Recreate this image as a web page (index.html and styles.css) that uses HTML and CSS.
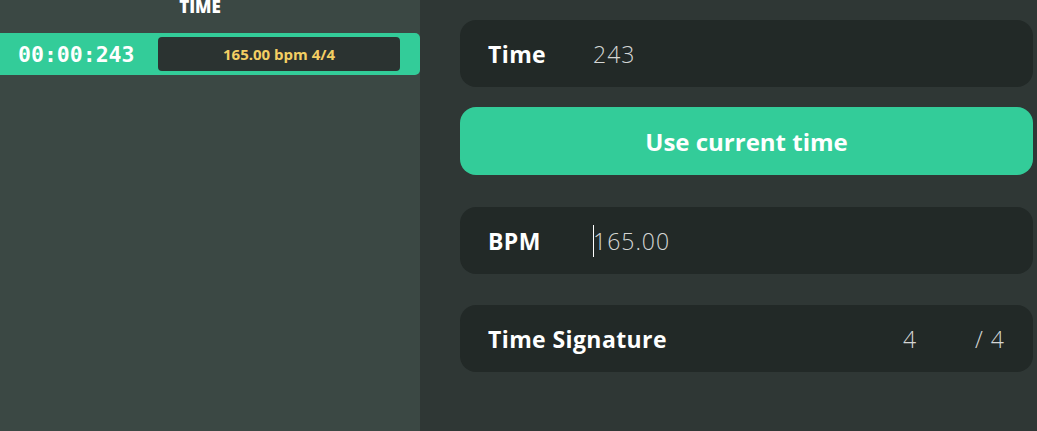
FILE: index.html
```html
<!DOCTYPE html>
<html>
<head>
<meta charset="utf-8">
<link rel="stylesheet" href="styles.css">
</head>
<body>
<div class="app">
  <aside class="list">
    <div class="list-head">TIME</div>
    <div class="row">
      <span class="row-time">00:00:243</span>
      <span class="row-info">165.00 bpm 4/4</span>
    </div>
  </aside>
  <main class="editor">
    <div class="field">
      <span class="label">Time</span>
      <span class="value">243</span>
    </div>
    <button class="use-btn">Use current time</button>
    <div class="field field-bpm">
      <span class="label">BPM</span>
      <span class="value"><span class="caret"></span>165.00</span>
    </div>
    <div class="field field-ts">
      <span class="label">Time Signature</span>
      <span class="ts">
        <span class="value ts-num">4</span>
        <span class="value ts-den">/ 4</span>
      </span>
    </div>
  </main>
</div>
</body>
</html>
```

FILE: styles.css
```css
* { box-sizing: border-box; }
html, body {
  margin: 0;
  padding: 0;
  width: 1037px;
  height: 431px;
  overflow: hidden;
  font-family: "Open Sans", "Noto Sans", sans-serif;
}
.app {
  display: flex;
  width: 1037px;
  height: 431px;
}
.list {
  width: 420px;
  flex: none;
  background: #3b4844;
}
.list-head {
  height: 33px;
  text-align: center;
  color: #fff;
  font-weight: 800;
  font-size: 17px;
  line-height: 16px;
  margin-top: -1px;
  width: 400px;
}
.row {
  height: 42px;
  margin-top: 1px;
  background: #33cc99;
  border-radius: 0 5px 5px 0;
  display: flex;
  align-items: center;
  padding-left: 18px;
}
.row-time {
  font-family: "DejaVu Sans Mono", monospace;
  font-weight: bold;
  font-size: 21.5px;
  color: #fff;
  width: 140px;
}
.row-info {
  width: 242px;
  height: 34px;
  background: #2b3331;
  border-radius: 4px;
  color: #f3cf63;
  font-weight: 700;
  font-size: 15px;
  display: flex;
  align-items: center;
  justify-content: center;
}
.editor {
  flex: 1;
  background: #2f3735;
  padding: 20px 4px 0 40px;
  display: flex;
  flex-direction: column;
}
.field {
  height: 67px;
  background: #222927;
  border-radius: 16px;
  display: flex;
  align-items: center;
  padding: 0 28px;
}
.label {
  color: #fff;
  font-weight: 700;
  font-size: 23px;
  letter-spacing: 0.4px;
  width: 105px;
}
.value {
  color: #d4d6d5;
  font-weight: 300;
  font-size: 23px;
  letter-spacing: 1px;
  display: inline-flex;
  align-items: center;
}
.caret {
  display: inline-block;
  width: 1px;
  height: 32px;
  background: #fff;
  margin-right: -1px;
}
.use-btn {
  margin-top: 20px;
  height: 68px;
  border: none;
  border-radius: 16px;
  background: #33cc99;
  color: #fff;
  font-family: "Open Sans", "Noto Sans", sans-serif;
  font-weight: 700;
  font-size: 24px;
  padding: 0;
}
.field-bpm { margin-top: 32px; }
.field-ts {
  margin-top: 31px;
  justify-content: space-between;
}
.field-ts .label { width: auto; }
.ts { display: flex; }
.ts-den { margin-left: 58px; }
```
